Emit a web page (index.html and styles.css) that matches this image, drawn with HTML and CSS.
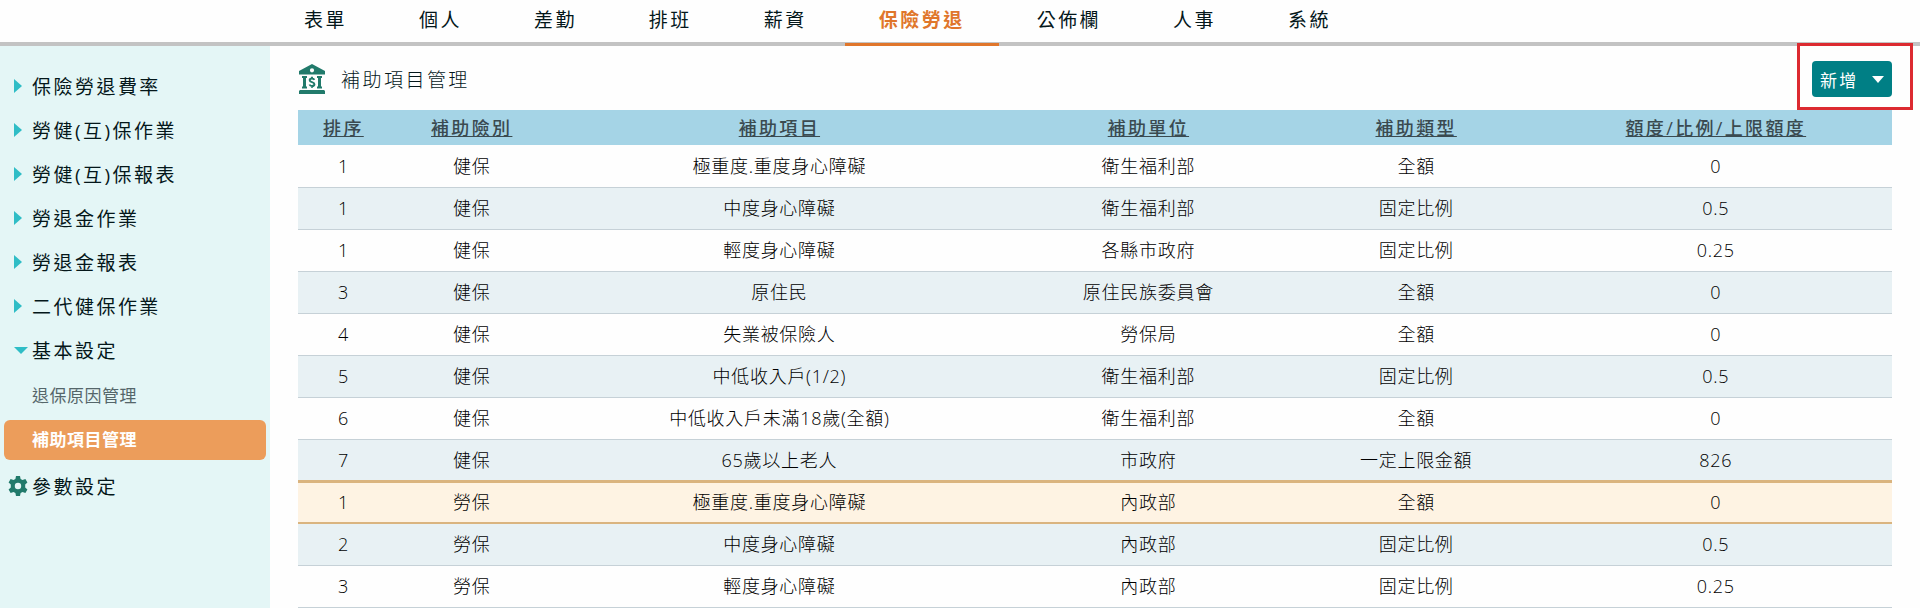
FILE: index.html
```html
<!DOCTYPE html>
<html lang="zh-Hant">
<head>
    <meta charset="UTF-8">
    <meta name="viewport" content="width=device-width, initial-scale=1.0">
    <title>補助項目管理</title>
    <link rel="stylesheet" href="styles.css">
</head>
<body>
    <nav class="topnav">
        <a href="#">表單</a>
        <a href="#">個人</a>
        <a href="#">差勤</a>
        <a href="#">排班</a>
        <a href="#">薪資</a>
        <a href="#" class="active">保險勞退</a>
        <a href="#">公佈欄</a>
        <a href="#">人事</a>
        <a href="#">系統</a>
    </nav>

    <div class="layout">
        <aside class="sidebar">
            <ul class="menu">
                <li><a href="#" class="menu-item"><span class="marker"><i class="arrow-right"></i></span>保險勞退費率</a></li>
                <li><a href="#" class="menu-item"><span class="marker"><i class="arrow-right"></i></span>勞健(互)保作業</a></li>
                <li><a href="#" class="menu-item"><span class="marker"><i class="arrow-right"></i></span>勞健(互)保報表</a></li>
                <li><a href="#" class="menu-item"><span class="marker"><i class="arrow-right"></i></span>勞退金作業</a></li>
                <li><a href="#" class="menu-item"><span class="marker"><i class="arrow-right"></i></span>勞退金報表</a></li>
                <li><a href="#" class="menu-item"><span class="marker"><i class="arrow-right"></i></span>二代健保作業</a></li>
                <li>
                    <a href="#" class="menu-item"><span class="marker"><i class="arrow-down"></i></span>基本設定</a>
                    <ul class="submenu">
                        <li><a href="#">退保原因管理</a></li>
                        <li><a href="#" class="active">補助項目管理</a></li>
                    </ul>
                </li>
                <li>
                    <a href="#" class="menu-item">
                        <span class="marker marker-gear">
                            <svg width="20" height="20" viewBox="0 0 20 20" aria-hidden="true">
                                <path fill-rule="evenodd" d="M8 0h4l.6 3 1.9 1.1 2.9-1 2 3.5L17.200 8.600v2.800l2.200 2-2 3.500-2.900-1-1.900 1.100L12 20H8l-.6-3-1.900-1.100-2.900 1-2-3.500 2.200-2V8.600L.6 6.600l2-3.500 2.900 1L7.400 3zM10 6.800a3.200 3.200 0 1 0 0 6.400 3.200 3.200 0 0 0 0-6.400z"/>
                            </svg>
                        </span>參數設定
                    </a>
                </li>
            </ul>
        </aside>

        <main class="content">
            <header class="page-head">
                <svg class="page-icon" width="28" height="30" viewBox="0 0 28 30" aria-hidden="true">
                    <path fill-rule="evenodd" d="M14 0l13 7v3.500H1V7zM14 4.200a2.100 2.100 0 1 0 0 4.200 2.100 2.100 0 0 0 0-4.200z"/>
                    <path d="M4 12h5v2H8v8.500h1v2H4v-2h1V14H4zM19 12h5v2h-1v8.500h1v2h-5v-2h1V14h-1z"/>
                    <path d="M2 26h24l1 1v3H1v-3z"/>
                    <path class="coin" d="M16.300 15.800c-.4-.9-1.200-1.300-2.300-1.300-1.400 0-2.300.7-2.300 1.700 0 2.600 4.700 1.300 4.700 4 0 1.100-1 1.800-2.400 1.800-1.200 0-2.100-.5-2.500-1.500M14 12.800v1.700M14 22v1.700"/>
                </svg>
                <h1>補助項目管理</h1>
                <div class="add-wrap">
                    <button type="button" class="btn-add">新增<i class="caret"></i></button>
                </div>
            </header>

            <table class="grid">
                <colgroup>
                    <col class="col-order">
                    <col class="col-kind">
                    <col class="col-item">
                    <col class="col-unit">
                    <col class="col-type">
                    <col class="col-amount">
                </colgroup>
                <thead>
                    <tr>
                        <th><a href="#">排序</a></th>
                        <th><a href="#">補助險別</a></th>
                        <th><a href="#">補助項目</a></th>
                        <th><a href="#">補助單位</a></th>
                        <th><a href="#">補助類型</a></th>
                        <th><a href="#">額度/比例/上限額度</a></th>
                    </tr>
                </thead>
                <tbody>
                    <tr><td>1</td><td>健保</td><td>極重度.重度身心障礙</td><td>衛生福利部</td><td>全額</td><td>0</td></tr>
                    <tr><td>1</td><td>健保</td><td>中度身心障礙</td><td>衛生福利部</td><td>固定比例</td><td>0.5</td></tr>
                    <tr><td>1</td><td>健保</td><td>輕度身心障礙</td><td>各縣市政府</td><td>固定比例</td><td>0.25</td></tr>
                    <tr><td>3</td><td>健保</td><td>原住民</td><td>原住民族委員會</td><td>全額</td><td>0</td></tr>
                    <tr><td>4</td><td>健保</td><td>失業被保險人</td><td>勞保局</td><td>全額</td><td>0</td></tr>
                    <tr><td>5</td><td>健保</td><td>中低收入戶(1/2)</td><td>衛生福利部</td><td>固定比例</td><td>0.5</td></tr>
                    <tr><td>6</td><td>健保</td><td>中低收入戶未滿18歲(全額)</td><td>衛生福利部</td><td>全額</td><td>0</td></tr>
                    <tr><td>7</td><td>健保</td><td>65歲以上老人</td><td>市政府</td><td>一定上限金額</td><td>826</td></tr>
                    <tr class="selected"><td>1</td><td>勞保</td><td>極重度.重度身心障礙</td><td>內政部</td><td>全額</td><td>0</td></tr>
                    <tr><td>2</td><td>勞保</td><td>中度身心障礙</td><td>內政部</td><td>固定比例</td><td>0.5</td></tr>
                    <tr><td>3</td><td>勞保</td><td>輕度身心障礙</td><td>內政部</td><td>固定比例</td><td>0.25</td></tr>
                </tbody>
            </table>
        </main>
    </div>
</body>
</html>
```
FILE: styles.css
```css
* {
    box-sizing: border-box;
}
body {
    margin: 0;
    min-height: 100vh;
    display: flex;
    flex-direction: column;
    font-family: "Open Sans", "Noto Sans CJK TC", sans-serif;
    font-size: 19px;
    color: #04171a;
    background-color: #fefefe;
}
a {
    color: inherit;
    text-decoration: none;
}
ul {
    list-style: none;
    margin: 0;
    padding: 0;
}

/* top navigation */
.topnav {
    display: flex;
    gap: 4px;
    height: 46px;
    padding-left: 270px;
    border-bottom: 4px solid #c3c3c3;
    letter-spacing: 0.13em;
}
.topnav a {
    height: 46px;
    padding: 0 34px;
    line-height: 40px;
    white-space: nowrap;
}
.topnav a.active {
    color: #e0762b;
    font-weight: bold;
    border-bottom: 3px solid #e0762b;
}

.layout {
    flex: 1;
    display: flex;
}

/* sidebar */
.sidebar {
    flex: 0 0 270px;
    padding-top: 18px;
    background-color: #e4f6f6;
}
.menu-item {
    display: flex;
    align-items: center;
    height: 44px;
    letter-spacing: 0.13em;
}
.marker {
    display: flex;
    width: 32px;
    padding-left: 14px;
}
.marker-gear {
    padding-left: 8px;
    fill: #217a6b;
}
.arrow-right {
    border-left: 8px solid #2fbdc6;
    border-top: 7px solid transparent;
    border-bottom: 7px solid transparent;
}
.arrow-down {
    border-top: 7px solid #2fbdc6;
    border-left: 7px solid transparent;
    border-right: 7px solid transparent;
}
.submenu {
    display: flex;
    flex-direction: column;
    gap: 4px;
    padding: 4px;
}
.submenu a {
    display: block;
    padding-left: 28px;
    line-height: 40px;
    font-size: 17px;
    letter-spacing: 0.03em;
    color: #55666a;
    border-radius: 6px;
}
.submenu a.active {
    color: #fff;
    font-weight: bold;
    background-color: #ec9d5b;
}

/* page content */
.content {
    flex: 1;
    padding: 0 28px;
}
.page-head {
    display: flex;
    align-items: center;
    height: 64px;
    padding-top: 2px;
}
.page-icon {
    fill: #217a6b;
}
.page-icon .coin {
    fill: none;
    stroke: #217a6b;
    stroke-width: 2;
}
h1 {
    margin: 0 0 0 15px;
    font-size: 19px;
    font-weight: 300;
    letter-spacing: 0.13em;
}
.add-wrap {
    position: relative;
    margin-left: auto;
}
/* highlight frame around the add button */
.add-wrap::after {
    content: "";
    position: absolute;
    top: -18px;
    right: -21px;
    bottom: -13px;
    left: -15px;
    border: 3px solid #dc2a30;
    pointer-events: none;
}
.btn-add {
    display: flex;
    align-items: center;
    justify-content: space-between;
    width: 80px;
    height: 36px;
    padding: 0 8px;
    border: none;
    border-radius: 4px;
    background-color: #007f85;
    color: #fff;
    font-family: inherit;
    font-size: 17px;
    letter-spacing: 0.13em;
    cursor: pointer;
}
.caret {
    border-top: 7px solid #fff;
    border-left: 6px solid transparent;
    border-right: 6px solid transparent;
}

/* data table */
.grid {
    width: 100%;
    table-layout: fixed;
    border-collapse: collapse;
    font-size: 18px;
    text-align: center;
}
.col-order { width: 5.7%; }
.col-kind { width: 10.4%; }
.col-item { width: 28.2%; }
.col-unit { width: 18.1%; }
.col-type { width: 15.5%; }
.col-amount { width: 22.1%; }
.grid th {
    height: 35px;
    padding: 0;
    font-weight: 500;
    line-height: 24px;
    letter-spacing: 0.13em;
    color: #3a4a50;
    background-color: #a5d4e6;
}
.grid th a {
    text-decoration: underline;
}
.grid td {
    height: 42px;
    padding: 0;
    line-height: 24px;
    font-weight: 300;
    letter-spacing: 0.04em;
    color: #000;
    border-bottom: 1px solid #c6d1d7;
}
.grid tbody tr:nth-child(even) {
    background-color: #e8f1f4;
}
.grid tbody tr.selected {
    background-color: #fef3e3;
}
.grid tr.selected td {
    border-top: 3px solid #dab47f;
    border-bottom: 2px solid #dab47f;
}
```
